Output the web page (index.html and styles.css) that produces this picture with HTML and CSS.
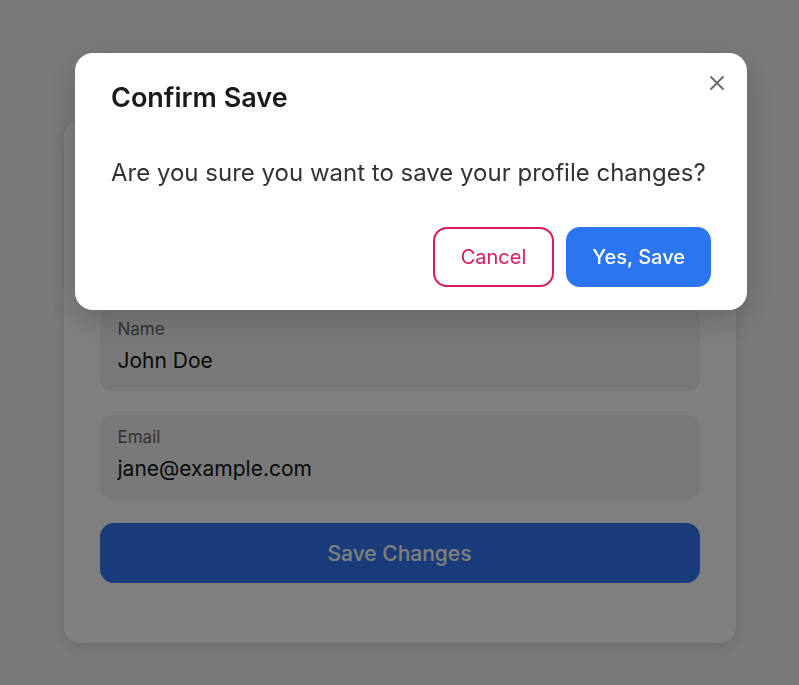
FILE: index.html
```html
<!DOCTYPE html>
<html lang="en">
<head>
<meta charset="utf-8">
<title>Confirm Save</title>
<link rel="stylesheet" href="styles.css">
</head>
<body>
<main class="card">
  <div class="card-header" aria-hidden="true"></div>
  <div class="field">
    <div class="field-label">Name</div>
    <div class="field-value">John Doe</div>
  </div>
  <div class="field">
    <div class="field-label">Email</div>
    <div class="field-value">jane@example.com</div>
  </div>
  <button class="save-btn" type="button">Save Changes</button>
</main>

<div class="overlay">
  <div class="modal" role="dialog" aria-labelledby="modal-title">
    <button class="close-btn" type="button" aria-label="Close">
      <svg width="14" height="14" viewBox="0 0 14 14" aria-hidden="true">
        <path d="M1 1L13 13M13 1L1 13" stroke="#666" stroke-width="1.8" stroke-linecap="round" fill="none"/>
      </svg>
    </button>
    <h2 class="modal-title" id="modal-title">Confirm Save</h2>
    <p class="modal-text">Are you sure you want to save your profile changes?</p>
    <div class="modal-actions">
      <button class="btn btn-cancel" type="button">Cancel</button>
      <button class="btn btn-confirm" type="button">Yes, Save</button>
    </div>
  </div>
</div>
</body>
</html>
```

FILE: styles.css
```css
* { box-sizing: border-box; }

html, body {
  margin: 0;
  padding: 0;
}

body {
  background: #f4f5f4;
  font-family: Inter, "Noto Sans", "Liberation Sans", sans-serif;
  color: #111;
  min-height: 685px;
  padding-top: 120px;
}

.card {
  width: 672px;
  margin: 0 auto;
  background: #ffffff;
  border-radius: 16px;
  padding: 36px 36px 60px;
  box-shadow: 0 4px 14px rgba(0, 0, 0, 0.12);
  display: flex;
  flex-direction: column;
}

.card-header {
  height: 151px;
}

.field {
  background: #f3f3f4;
  border-radius: 12px;
  padding: 12px 18px 16px;
  margin-bottom: 24px;
  display: flex;
  flex-direction: column;
  gap: 8px;
}

.field:first-of-type {
  padding-top: 13px;
  padding-bottom: 15px;
}

.field-label {
  font-size: 17px;
  line-height: 20px;
  color: #666;
}

.field-value {
  font-size: 21px;
  line-height: 28px;
  color: #111;
}

.save-btn {
  height: 60px;
  border: none;
  border-radius: 14px;
  background: #3679f5;
  color: #ffffff;
  font-family: inherit;
  font-size: 21px;
  font-weight: 500;
}

.overlay {
  position: fixed;
  inset: 0;
  background: rgba(0, 0, 0, 0.5);
}

.modal {
  position: absolute;
  left: 75px;
  top: 53px;
  width: 672px;
  background: #ffffff;
  border-radius: 18px;
  padding: 28px 36px 23px;
  box-shadow: 0 10px 30px rgba(0, 0, 0, 0.18);
}

.close-btn {
  position: absolute;
  top: 23px;
  right: 23px;
  width: 14px;
  height: 14px;
  padding: 0;
  border: none;
  background: none;
  display: block;
}

.close-btn svg { display: block; }

.modal-title {
  margin: 0;
  font-size: 27px;
  line-height: 33px;
  font-weight: 600;
  color: #1a1a1a;
}

.modal-text {
  margin: 43px 0 0;
  font-size: 24px;
  line-height: 32px;
  color: #333;
}

.modal-actions {
  margin-top: 38px;
  display: flex;
  justify-content: flex-end;
  gap: 12px;
}

.btn {
  font-family: inherit;
  font-size: 20px;
  line-height: 24px;
  padding: 16px 24px;
  border-radius: 14px;
  border: 2px solid transparent;
  cursor: pointer;
}

.btn-cancel {
  background: #ffffff;
  border-color: #dc1a61;
  color: #dc1a61;
  padding-left: 26px;
  padding-right: 26px;
}

.btn-confirm {
  background: #2b75f1;
  border-color: #2b75f1;
  color: #ffffff;
  font-weight: 500;
  padding-left: 24px;
  padding-right: 24px;
}
```
